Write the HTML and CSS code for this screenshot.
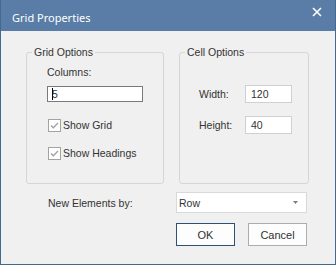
FILE: index.html
```html
<!DOCTYPE html>
<html lang="en">
<head>
  <meta charset="UTF-8" />
  <title>Grid Properties</title>
  <link rel="stylesheet" href="styles.css">
</head>
<body>
  <div class="window">
    <div class="titlebar">
      <span class="title">Grid Properties</span>
      <svg class="close" width="10" height="10" viewBox="0 0 10 10">
        <path d="M1 1 L9 9 M9 1 L1 9" stroke="#fff" stroke-width="1.6" />
      </svg>
    </div>

    <div class="content">
      <div class="groups">
        <fieldset class="group grid-options">
          <legend>Grid Options</legend>
          <div class="group-body">
            <div class="field-label">Columns:</div>
            <div class="textbox columns"><span class="caret"></span>5</div>
            <label class="check first">
              <svg class="box" width="13" height="13" viewBox="0 0 13 13">
                <rect x="0.5" y="0.5" width="12" height="12" fill="#fff" stroke="#a3a3a3" />
                <path d="M3 6.5 L5.3 8.8 L10 4" fill="none" stroke="#a0a0a0" stroke-width="1.3" />
              </svg>
              Show Grid
            </label>
            <label class="check">
              <svg class="box" width="13" height="13" viewBox="0 0 13 13">
                <rect x="0.5" y="0.5" width="12" height="12" fill="#fff" stroke="#a3a3a3" />
                <path d="M3 6.5 L5.3 8.8 L10 4" fill="none" stroke="#a0a0a0" stroke-width="1.3" />
              </svg>
              Show Headings
            </label>
          </div>
        </fieldset>

        <fieldset class="group cell-options">
          <legend>Cell Options</legend>
          <div class="group-body">
            <div class="cell-grid">
              <span>Width:</span>
              <div class="textbox small">120</div>
              <span>Height:</span>
              <div class="textbox small">40</div>
            </div>
          </div>
        </fieldset>
      </div>

      <div class="new-elements">
        <span class="label">New Elements by:</span>
        <div class="combo">
          <span>Row</span>
          <svg width="5" height="3" viewBox="0 0 5 3">
            <polygon points="0,0 5,0 2.5,3" fill="#7a7a7a" />
          </svg>
        </div>
      </div>

      <div class="buttons">
        <button class="btn default">OK</button>
        <button class="btn">Cancel</button>
      </div>
    </div>
  </div>
</body>
</html>
```

FILE: styles.css
```css
* {
  box-sizing: border-box;
}

body {
  margin: 0;
  font-family: 'Liberation Sans', Arial, sans-serif;
  font-size: 10.5px;
  color: #333;
}

.window {
  width: 336px;
  height: 265px;
  background: #f0f0f0;
  border: 1px solid #45698f;
  border-top: none;
}

.titlebar {
  height: 31px;
  background: #597da7;
  display: flex;
  justify-content: space-between;
  align-items: flex-start;
}

.title {
  font-family: 'Noto Sans', sans-serif;
  font-size: 11px;
  line-height: 15px;
  color: #fff;
  padding: 10px 0 0 11px;
}

.close {
  margin: 7px 13px 0 0;
}

.content {
  padding: 14px 0 0 25px;
}

.groups {
  display: flex;
  gap: 15px;
}

.group {
  margin: 0;
  padding: 0 5px;
  border: 1px solid #d6d6d6;
  border-radius: 3px;
  height: 139px;
  min-width: 0;
}

.group legend {
  padding: 0 2px;
  line-height: 14px;
}

.grid-options {
  width: 138px;
}

.cell-options {
  width: 130px;
}

.grid-options .group-body {
  padding-left: 15px;
}

.field-label {
  margin-top: 6px;
  line-height: 14px;
}

.textbox {
  background: #fff;
  display: flex;
  align-items: center;
}

.textbox.columns {
  margin-top: 7px;
  width: 96px;
  height: 16px;
  border: 1px solid #7a7a7a;
  padding-left: 4px;
}

.caret {
  width: 1px;
  height: 12px;
  background: #000;
  margin-right: -1px;
}

.check {
  display: flex;
  align-items: center;
  gap: 2px;
  height: 14px;
  margin-top: 14px;
  margin-left: 1px;
}

.check.first {
  margin-top: 16px;
}

.cell-options .group-body {
  padding-left: 14px;
}

.cell-grid {
  margin-top: 26px;
  display: grid;
  grid-template-columns: 46px 47px;
  grid-auto-rows: 18px;
  row-gap: 13px;
  align-items: center;
}

.textbox.small {
  height: 18px;
  border: 1px solid #d0d0d0;
  padding-left: 5px;
}

.new-elements {
  display: flex;
  align-items: center;
  margin-top: 8px;
}

.new-elements .label {
  width: 150px;
  padding-left: 22px;
}

.combo {
  width: 131px;
  height: 21px;
  background: #fff;
  border: 1px solid #d9d9d9;
  display: flex;
  align-items: center;
  justify-content: space-between;
  padding: 0 8px 0 2px;
}

.buttons {
  display: flex;
  gap: 13px;
  margin-top: 10px;
  padding-left: 150px;
}

.btn {
  width: 59px;
  height: 23px;
  padding: 0;
  font-family: inherit;
  font-size: 11px;
  color: #333;
  background: #fdfdfd;
  border: 1px solid #adadad;
}

.btn.default {
  border-color: #2f4f74;
}
```
